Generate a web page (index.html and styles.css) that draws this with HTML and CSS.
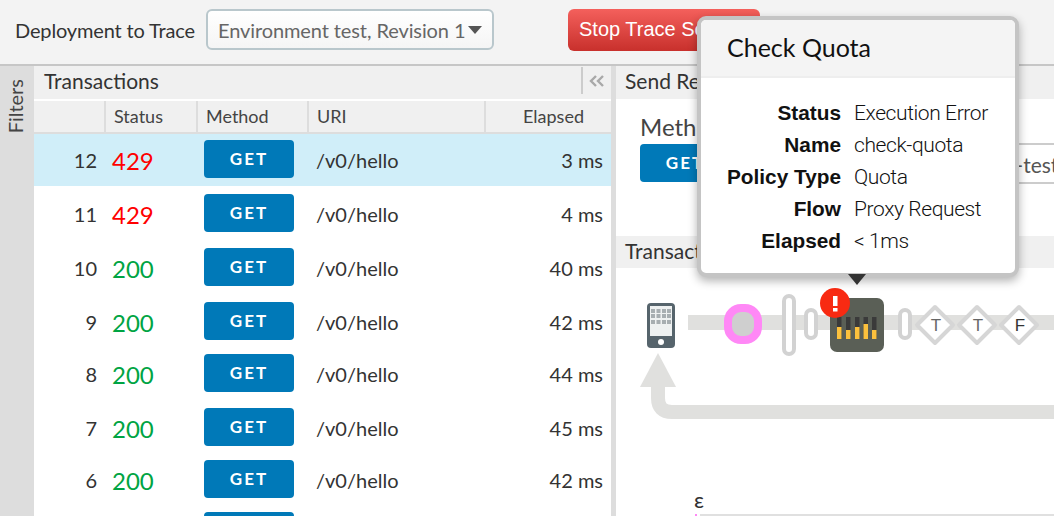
FILE: index.html
```html
<!DOCTYPE html>
<html lang="en">
<head>
    <meta charset="UTF-8">
    <title>Trace</title>
    <link rel="stylesheet" href="styles.css">
</head>
<body>
    <div class="topbar">
        <span class="deploy-label">Deployment to Trace</span>
        <div class="deploy-select">
            <span>Environment test, Revision 1</span>
            <i class="caret"></i>
        </div>
        <button class="stop-btn">Stop Trace Session</button>
    </div>

    <div class="main">
        <div class="filters"><span>Filters</span></div>

        <div class="transactions">
            <div class="panel-head">
                <span>Transactions</span>
                <div class="collapse">
                    <svg width="16" height="12" viewBox="0 0 16 12"><path d="M7 1 2 6l5 5M14 1 9 6l5 5" fill="none" stroke="#a9a9a9" stroke-width="2.4"/></svg>
                </div>
            </div>
            <div class="cols">
                <div class="col c-num"></div>
                <div class="col c-status">Status</div>
                <div class="col c-method">Method</div>
                <div class="col c-uri">URI</div>
                <div class="col c-elapsed">Elapsed</div>
            </div>
            <div class="row selected">
                <div class="num">12</div><div class="code err">429</div>
                <div class="method"><span class="get">GET</span></div>
                <div class="uri">/v0/hello</div><div class="time">3 ms</div>
            </div>
            <div class="row">
                <div class="num">11</div><div class="code err">429</div>
                <div class="method"><span class="get">GET</span></div>
                <div class="uri">/v0/hello</div><div class="time">4 ms</div>
            </div>
            <div class="row">
                <div class="num">10</div><div class="code ok">200</div>
                <div class="method"><span class="get">GET</span></div>
                <div class="uri">/v0/hello</div><div class="time">40 ms</div>
            </div>
            <div class="row short">
                <div class="num">9</div><div class="code ok">200</div>
                <div class="method"><span class="get">GET</span></div>
                <div class="uri">/v0/hello</div><div class="time">42 ms</div>
            </div>
            <div class="row">
                <div class="num">8</div><div class="code ok">200</div>
                <div class="method"><span class="get">GET</span></div>
                <div class="uri">/v0/hello</div><div class="time">44 ms</div>
            </div>
            <div class="row short">
                <div class="num">7</div><div class="code ok">200</div>
                <div class="method"><span class="get">GET</span></div>
                <div class="uri">/v0/hello</div><div class="time">45 ms</div>
            </div>
            <div class="row short">
                <div class="num">6</div><div class="code ok">200</div>
                <div class="method"><span class="get">GET</span></div>
                <div class="uri">/v0/hello</div><div class="time">42 ms</div>
            </div>
            <div class="row short">
                <div class="num"></div><div class="code"></div>
                <div class="method"><span class="get"></span></div>
            </div>
        </div>

        <div class="gutter"></div>

        <div class="detail">
            <div class="panel-head send-head"><span>Send Request</span></div>
            <div class="send-body">
                <div class="send-method">
                    <div class="send-label">Method</div>
                    <span class="get">GET</span>
                </div>
                <div class="send-url">http://apigee-org-name-prod-test.apigee.net/v0/hello</div>
            </div>
            <div class="panel-head map-head"><span>Transaction Map</span></div>
            <svg class="map" width="438" height="248" viewBox="616 268 438 248">
                <!-- flow lines -->
                <rect x="688" y="315" width="366" height="15" fill="#e0e0de"/>
                <path d="M658 384V398Q658 412 672 412H1054" fill="none" stroke="#e0e0de" stroke-width="14"/>
                <path d="M658 353 676 387H640Z" fill="#e0e0de"/>

                <!-- phone -->
                <rect x="647" y="303" width="28" height="45" rx="4" fill="#56646c"/>
                <rect x="650" y="306" width="22" height="30" fill="#eef1f1"/>
                <g fill="#a7aeb1">
                    <rect x="651" y="309" width="4" height="4"/><rect x="656.500" y="309" width="4" height="4"/><rect x="662" y="309" width="4" height="4"/><rect x="667" y="309" width="4" height="4"/>
                    <rect x="651" y="314" width="4" height="4"/><rect x="656.500" y="314" width="4" height="4"/><rect x="662" y="314" width="4" height="4"/><rect x="667" y="314" width="4" height="4"/>
                    <rect x="651" y="320" width="4" height="4"/><rect x="656.500" y="320" width="4" height="4"/><rect x="662" y="320" width="4" height="4"/><rect x="667" y="320" width="4" height="4"/>
                </g>
                <circle cx="661" cy="342" r="3" fill="#fff"/>

                <!-- pink step -->
                <rect x="728" y="308" width="30" height="32" rx="13" fill="#cfcfcf" stroke="#ff88f6" stroke-width="8"/>

                <!-- capsules -->
                <rect x="784" y="296" width="10" height="58" rx="5" fill="#fff" stroke="#d2d2d2" stroke-width="4"/>
                <rect x="806" y="310" width="10" height="28" rx="5" fill="#fff" stroke="#d2d2d2" stroke-width="4"/>
                <rect x="900" y="310" width="10" height="28" rx="5" fill="#fff" stroke="#d2d2d2" stroke-width="4"/>

                <!-- quota policy -->
                <rect x="830" y="298" width="54" height="54" rx="7" fill="#5a5f56"/>
                <g fill="#3a3a3a">
                    <rect x="837" y="317" width="4.5" height="22"/><rect x="846" y="317" width="4.5" height="22"/><rect x="855" y="317" width="4.5" height="22"/><rect x="863.500" y="317" width="4.5" height="22"/><rect x="872" y="317" width="4.5" height="22"/>
                </g>
                <g fill="#fcc13d">
                    <rect x="837" y="327" width="4.5" height="12"/><rect x="846" y="330" width="4.5" height="9"/><rect x="855" y="327" width="4.5" height="12"/><rect x="863.500" y="324" width="4.5" height="15"/><rect x="872" y="330" width="4.5" height="9"/>
                </g>
                <circle cx="835" cy="303" r="15" fill="#f82a12"/>
                <rect x="833" y="296" width="4.500" height="10" fill="#fff"/>
                <rect x="833" y="308" width="4.500" height="3.500" fill="#fff"/>

                <!-- conditions -->
                <g fill="#fff" stroke="#d6d6d6" stroke-width="4" stroke-linejoin="round">
                    <path d="M935 307 953 325 935 343 917 325Z"/>
                    <path d="M977 307 995 325 977 343 959 325Z"/>
                    <path d="M1019 307 1037 325 1019 343 1001 325Z"/>
                </g>
                <g class="cond">
                    <text x="936" y="331" fill="#666">T</text>
                    <text x="978" y="331" fill="#666">T</text>
                    <text x="1020" y="331" fill="#333">F</text>
                </g>

                <!-- timeline -->
                <text class="eps" x="694" y="508">ε</text>
                <rect x="700" y="514" width="354" height="2" fill="#e0e0e0"/>
                <rect x="695" y="514" width="2" height="2" fill="#ff88f6"/>
            </svg>
        </div>
    </div>

    <div class="tip">
        <div class="tip-title">Check Quota</div>
        <div class="tip-body">
            <b>Status</b><span>Execution Error</span>
            <b>Name</b><span>check-quota</span>
            <b>Policy Type</b><span>Quota</span>
            <b>Flow</b><span>Proxy Request</span>
            <b>Elapsed</b><span>&lt; 1ms</span>
        </div>
        <i class="tip-arrow"></i>
    </div>
</body>
</html>
```

FILE: styles.css
```css
* {
    box-sizing: border-box;
}
body {
    margin: 0;
    width: 1054px;
    height: 516px;
    overflow: hidden;
    position: relative;
    font-family: Lato, sans-serif;
    color: #333;
    background: #fff;
}

.topbar {
    height: 66px;
    padding: 0 0 5px 15px;
    display: flex;
    align-items: center;
    background: #f3f3f3;
    border-bottom: 2px solid #c6c6c6;
}
.deploy-label {
    font-size: 20px;
    letter-spacing: -0.15px;
    width: 191px;
    white-space: nowrap;
}
.deploy-select {
    width: 288px;
    height: 41px;
    padding: 0 10px 0 10px;
    display: flex;
    align-items: center;
    justify-content: space-between;
    border: 2px solid #b9c7cc;
    border-radius: 6px;
    background: linear-gradient(#fff, #f5f5f5);
    font-size: 20px;
    letter-spacing: -0.1px;
    color: #666;
    white-space: nowrap;
}
.caret {
    border-left: 7px solid transparent;
    border-right: 7px solid transparent;
    border-top: 8px solid #555;
}
.stop-btn {
    margin-left: 74px;
    width: 192px;
    height: 42px;
    padding: 0 0 0 11px;
    text-align: left;
    border: none;
    border-radius: 6px;
    background: linear-gradient(#f4605c, #c8302c);
    color: #fff;
    font-family: "Liberation Sans", Arial, sans-serif;
    font-size: 20px;
    white-space: nowrap;
    overflow: hidden;
}

.main {
    display: flex;
    height: 450px;
}
.filters {
    width: 34px;
    background: #ddd;
    padding: 13px 0 0 3px;
}
.filters span {
    display: block;
    writing-mode: vertical-rl;
    transform: rotate(180deg);
    font-size: 20px;
    color: #444;
}

.transactions {
    width: 577px;
    overflow: hidden;
}
.panel-head {
    height: 33px;
    padding: 0 0 4px 10px;
    display: flex;
    align-items: center;
    justify-content: space-between;
    background: #f0f0f0;
    font-size: 21px;
    white-space: nowrap;
}
.collapse {
    width: 30px;
    height: 27px;
    border-left: 2px solid #ccc;
    display: flex;
    align-items: center;
    justify-content: center;
}

.cols {
    height: 35px;
    display: flex;
    background: #f0f0f0;
    border-top: 2px solid #fff;
    border-bottom: 2px solid #ddd;
    font-size: 18px;
    color: #444;
}
.col {
    padding-left: 8px;
    line-height: 30px;
    border-right: 2px solid #ddd;
}
.c-num { width: 70px; margin-left: 2px; }
.c-status { width: 92px; }
.c-method { width: 111px; }
.c-uri { width: 177px; }
.c-elapsed { width: 125px; border-right: none; text-align: right; padding-right: 27px; }

.row {
    height: 54px;
    display: flex;
    font-size: 20px;
    color: #333;
    padding-top: 6px;
}
.row.short {
    height: 52px;
}
.row.selected {
    background: #d0eef9;
    height: 52px;
    margin-bottom: 2px;
}
.num {
    width: 63px;
    line-height: 40px;
    text-align: right;
}
.code {
    width: 107px;
    padding-left: 15px;
    font-size: 24px;
    line-height: 42px;
}
.code.err { color: #f00; }
.code.ok { color: #00a443; }
.method {
    width: 112px;
}
.get {
    display: block;
    width: 90px;
    height: 38px;
    line-height: 38px;
    text-align: center;
    border-radius: 4px;
    background: #0079b8;
    color: #fff;
    font-size: 17px;
    font-weight: 700;
    letter-spacing: 2px;
}
.uri {
    width: 160px;
    line-height: 40px;
}
.time {
    width: 127px;
    line-height: 40px;
    text-align: right;
}

.gutter {
    width: 5px;
    background: #ddd;
}
.detail {
    flex: 1;
    min-width: 0;
    overflow: hidden;
}
.detail .panel-head {
    padding-left: 9px;
}
.send-body {
    height: 137px;
    padding: 11px 0 0 24px;
    display: flex;
}
.send-label {
    font-size: 24px;
    line-height: 34px;
    color: #444;
}
.send-url {
    margin-top: 33px;
    margin-left: 10px;
    height: 41px;
    flex: 1;
    padding-left: 10px;
    border: 2px solid #ccc;
    border-right: none;
    font-size: 21px;
    line-height: 39px;
    color: #555;
    white-space: nowrap;
    overflow: hidden;
}
.map-head {
    height: 32px;
}
.map {
    display: block;
}
.cond text {
    font-family: "Liberation Sans", Arial, sans-serif;
    font-size: 17px;
    text-anchor: middle;
}
.eps {
    font-family: Lato, sans-serif;
    font-size: 22px;
    fill: #333;
}

.tip {
    position: absolute;
    left: 697px;
    top: 16px;
    width: 322px;
    height: 261px;
    background: #fff;
    border: 4px solid #c4c4c4;
    border-radius: 9px;
    box-shadow: 0 4px 10px rgba(0, 0, 0, 0.3);
}
.tip-title {
    height: 58px;
    padding-left: 26px;
    background: #f4f4f4;
    border-bottom: 2px solid #eee;
    border-radius: 5px 5px 0 0;
    font-size: 25px;
    line-height: 54px;
    color: #111;
}
.tip-body {
    display: grid;
    grid-template-columns: 140px 1fr;
    column-gap: 13px;
    grid-auto-rows: 32px;
    padding-top: 19px;
    font-size: 21px;
    line-height: 32px;
    color: #111;
}
.tip-body b {
    text-align: right;
    font-family: "Liberation Sans", Arial, sans-serif;
    font-size: 20.800px;
}
.tip-body span {
    font-family: Roboto, sans-serif;
    font-weight: 300;
    letter-spacing: -0.4px;
}
.tip-arrow {
    position: absolute;
    left: 147px;
    top: 254px;
    border-left: 9px solid transparent;
    border-right: 9px solid transparent;
    border-top: 11px solid #333;
}
```
